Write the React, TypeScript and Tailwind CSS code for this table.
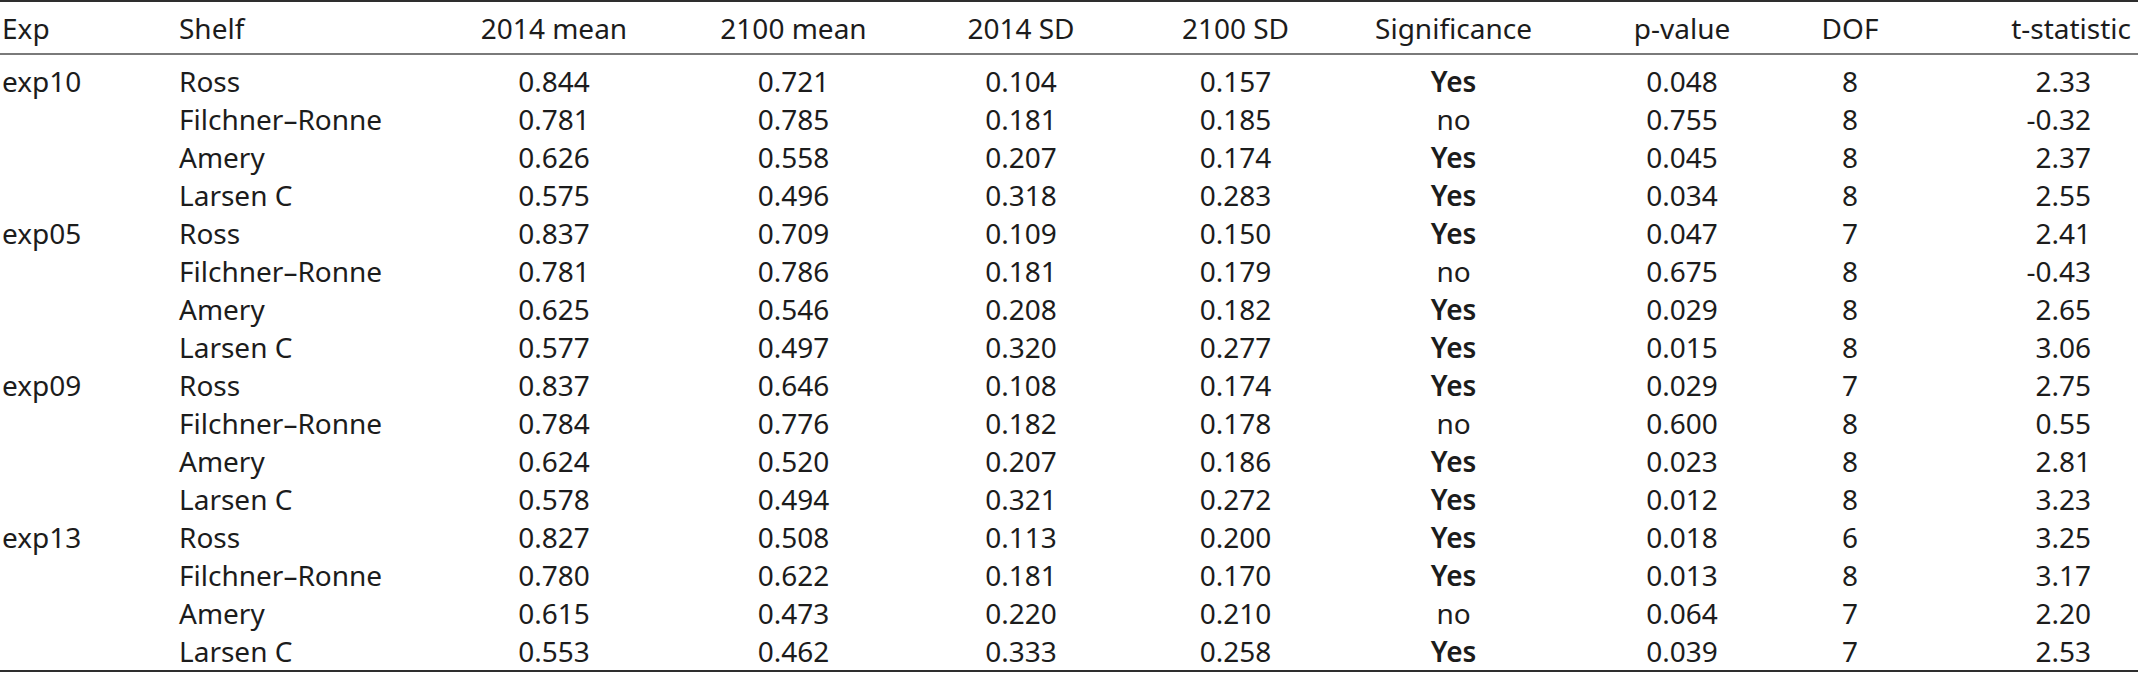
type Row = {
    exp: string;
    shelf: string;
    m14: string;
    m21: string;
    sd14: string;
    sd21: string;
    sig: boolean;
    p: string;
    dof: string;
    t: string;
};

const raw: [string, string, string, string, string, string, boolean, string, string, string][] = [
    ["exp10", "Ross", "0.844", "0.721", "0.104", "0.157", true, "0.048", "8", "2.33"],
    ["", "Filchner–Ronne", "0.781", "0.785", "0.181", "0.185", false, "0.755", "8", "-0.32"],
    ["", "Amery", "0.626", "0.558", "0.207", "0.174", true, "0.045", "8", "2.37"],
    ["", "Larsen C", "0.575", "0.496", "0.318", "0.283", true, "0.034", "8", "2.55"],
    ["exp05", "Ross", "0.837", "0.709", "0.109", "0.150", true, "0.047", "7", "2.41"],
    ["", "Filchner–Ronne", "0.781", "0.786", "0.181", "0.179", false, "0.675", "8", "-0.43"],
    ["", "Amery", "0.625", "0.546", "0.208", "0.182", true, "0.029", "8", "2.65"],
    ["", "Larsen C", "0.577", "0.497", "0.320", "0.277", true, "0.015", "8", "3.06"],
    ["exp09", "Ross", "0.837", "0.646", "0.108", "0.174", true, "0.029", "7", "2.75"],
    ["", "Filchner–Ronne", "0.784", "0.776", "0.182", "0.178", false, "0.600", "8", "0.55"],
    ["", "Amery", "0.624", "0.520", "0.207", "0.186", true, "0.023", "8", "2.81"],
    ["", "Larsen C", "0.578", "0.494", "0.321", "0.272", true, "0.012", "8", "3.23"],
    ["exp13", "Ross", "0.827", "0.508", "0.113", "0.200", true, "0.018", "6", "3.25"],
    ["", "Filchner–Ronne", "0.780", "0.622", "0.181", "0.170", true, "0.013", "8", "3.17"],
    ["", "Amery", "0.615", "0.473", "0.220", "0.210", false, "0.064", "7", "2.20"],
    ["", "Larsen C", "0.553", "0.462", "0.333", "0.258", true, "0.039", "7", "2.53"],
];

const rows: Row[] = raw.map(([exp, shelf, m14, m21, sd14, sd21, sig, p, dof, t]) => ({
    exp, shelf, m14, m21, sd14, sd21, sig, p, dof, t,
}));

const widths = [179, 254, 242, 237, 218, 211, 225, 232, 104, 236];

export default function App() {
    return (
        <div className="h-[677px] w-[2138px] bg-white font-['Noto_Sans','Liberation_Sans',sans-serif] text-[28px] leading-[38px] text-[#1c1c1c]">
            <table className="w-[2138px] table-fixed border-collapse border-t-[2px] border-b-[2px] border-[#2e2e2e]">
                <colgroup>
                    {widths.map((w, i) => (
                        <col key={i} style={{ width: w }} />
                    ))}
                </colgroup>
                <thead>
                    <tr className="h-[53px] border-b-[2px] border-[#7a7a7a]">
                        <th className="pl-[2px] text-left font-normal">Exp</th>
                        <th className="text-left font-normal">Shelf</th>
                        <th className="text-center font-normal">2014 mean</th>
                        <th className="text-center font-normal">2100 mean</th>
                        <th className="text-center font-normal">2014 SD</th>
                        <th className="text-center font-normal">2100 SD</th>
                        <th className="text-center font-normal">Significance</th>
                        <th className="text-center font-normal">p-value</th>
                        <th className="text-center font-normal">DOF</th>
                        <th className="pr-[7px] text-right font-normal">t-statistic</th>
                    </tr>
                </thead>
                <tbody>
                    <tr className="h-[8px]">
                        <td colSpan={10} className="p-0 leading-[8px]" />
                    </tr>
                    {rows.map((r, i) => (
                        <tr key={i} className="h-[38px]">
                            <td className="pl-[2px] text-left">{r.exp}</td>
                            <td className="text-left">{r.shelf}</td>
                            <td className="text-center">{r.m14}</td>
                            <td className="text-center">{r.m21}</td>
                            <td className="text-center">{r.sd14}</td>
                            <td className="text-center">{r.sd21}</td>
                            <td className={r.sig ? "text-center font-semibold" : "text-center"}>
                                {r.sig ? "Yes" : "no"}
                            </td>
                            <td className="text-center">{r.p}</td>
                            <td className="text-center">{r.dof}</td>
                            <td className="pr-[47px] text-right">{r.t}</td>
                        </tr>
                    ))}
                </tbody>
            </table>
        </div>
    );
}
